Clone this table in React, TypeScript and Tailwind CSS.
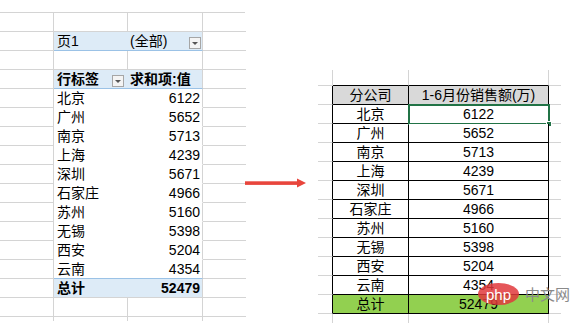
import React from 'react';

const cities: [string, number][] = [
  ['北京', 6122],
  ['广州', 5652],
  ['南京', 5713],
  ['上海', 4239],
  ['深圳', 5671],
  ['石家庄', 4966],
  ['苏州', 5160],
  ['无锡', 5398],
  ['西安', 5204],
  ['云南', 4354],
];

const font = { fontFamily: '"Liberation Sans", "Noto Sans CJK SC", sans-serif' };

const Dropdown = () => (
  <span className="mb-[1px] flex h-[12px] w-[12px] shrink-0 items-center justify-center self-end border border-[#a6a6a6] bg-[#f4f4f4]">
    <span className="h-0 w-0 border-x-[3px] border-t-[3px] border-x-transparent border-t-[#555]" />
  </span>
);

// one row of the left sheet; middle is either plain grid cells or a pivot cell
const LeftRow: React.FC<{ children?: React.ReactNode; h?: string }> = ({ children, h = 'h-[19px]' }) => (
  <div className={`flex ${h}`}>
    <div className="w-[54px] shrink-0 border-r border-b border-[#d4d4d4]" />
    {children ?? (
      <>
        <div className="w-[74px] shrink-0 border-r border-b border-[#d4d4d4]" />
        <div className="w-[75px] shrink-0 border-r border-b border-[#d4d4d4]" />
      </>
    )}
    <div className="w-[43px] shrink-0 border-b border-[#d4d4d4]" />
  </div>
);

const PivotCell: React.FC<{ bg: string; bottom: string; children: React.ReactNode }> = ({ bg, bottom, children }) => (
  <div className={`flex w-[149px] shrink-0 border-r border-b border-r-[#d4d4d4] text-[14px] leading-[18px] text-black ${bg} ${bottom}`}>
    {children}
  </div>
);

function LeftSheet() {
  return (
    <div className="mt-[12px] w-[245px] shrink-0 border-t border-[#d4d4d4]">
      <LeftRow />
      <LeftRow>
        <PivotCell bg="bg-[#ddebf7]" bottom="border-b-[#9bc2e6]">
          <span className="w-[74px] pl-[3px]">页1</span>
          <span className="flex flex-1 justify-between pl-[2px] pr-[1px]">
            <span>(全部)</span>
            <Dropdown />
          </span>
        </PivotCell>
      </LeftRow>
      <LeftRow />
      <LeftRow>
        <PivotCell bg="bg-[#ddebf7]" bottom="border-b-[#9bc2e6]">
          <span className="flex w-[74px] justify-between pl-[3px] pr-[4px] font-bold">
            <span>行标签</span>
            <Dropdown />
          </span>
          <span className="flex-1 pl-[2px] font-bold">求和项:值</span>
        </PivotCell>
      </LeftRow>
      {cities.map(([name, v], i) => (
        <LeftRow key={name}>
          <PivotCell
            bg="bg-white"
            bottom={i === cities.length - 1 ? 'border-b-[#9bc2e6]' : 'border-b-transparent'}
          >
            <span className="w-[74px] pl-[3px]">{name}</span>
            <span className="flex-1 pr-[2px] text-right">{v}</span>
          </PivotCell>
        </LeftRow>
      ))}
      <LeftRow>
        <PivotCell bg="bg-[#ddebf7]" bottom="border-b-[#d4d4d4]">
          <span className="w-[74px] pl-[3px] font-bold">总计</span>
          <span className="flex-1 pr-[2px] text-right font-bold">52479</span>
        </PivotCell>
      </LeftRow>
      <LeftRow />
      <div className="flex h-[4px]">
        <div className="w-[54px] shrink-0 border-r border-[#d4d4d4]" />
        <div className="w-[74px] shrink-0 border-r border-[#d4d4d4]" />
        <div className="w-[75px] shrink-0 border-r border-[#d4d4d4]" />
      </div>
    </div>
  );
}

const TableRow: React.FC<{ a: string; b: React.ReactNode; bg?: string; selected?: boolean }> = ({ a, b, bg = 'bg-white', selected }) => (
  <div className="flex h-[19px] text-[14px] leading-[18px] text-black">
    <div className="w-[15px] shrink-0 border-r border-b border-r-black border-b-[#d4d4d4]" />
    <div className={`w-[76px] shrink-0 border-r border-b border-black text-center ${bg}`}>{a}</div>
    <div className={`relative w-[140px] shrink-0 border-r border-b border-black text-center ${bg}`}>
      {b}
      {selected && (
        <span className="absolute -left-px -top-px -right-[2px] -bottom-[2px] border-2 border-[#217346]">
          <span className="absolute -right-[4px] -bottom-[4px] h-[6px] w-[6px] border border-white bg-[#217346]" />
        </span>
      )}
    </div>
    <div className="w-[12px] shrink-0 border-b border-[#d4d4d4]" />
  </div>
);

function RightSheet() {
  return (
    <div className="mt-[70px] w-[243px] shrink-0">
      <div className="flex h-[16px]">
        <div className="w-[15px] shrink-0 border-r border-b border-[#d4d4d4]" />
        <div className="w-[76px] shrink-0 border-r border-b border-r-[#d4d4d4] border-b-black" />
        <div className="w-[140px] shrink-0 border-r border-b border-r-[#d4d4d4] border-b-black" />
        <div className="w-[12px] shrink-0 border-b border-[#d4d4d4]" />
      </div>
      <TableRow a="分公司" b="1-6月份销售额(万)" bg="bg-[#d9d9d9]" />
      {cities.map(([name, v], i) => (
        <TableRow key={name} a={name} b={v} selected={i === 0} />
      ))}
      <TableRow a="总计" b="52479" bg="bg-[#92d050]" />
      <div className="flex h-[10px]">
        <div className="w-[15px] shrink-0 border-r border-[#d4d4d4]" />
        <div className="w-[76px] shrink-0 border-r border-[#d4d4d4]" />
        <div className="w-[140px] shrink-0 border-r border-[#d4d4d4]" />
      </div>
    </div>
  );
}

export default function App() {
  return (
    <div className="relative flex h-[323px] w-[578px] overflow-hidden bg-white" style={font}>
      <LeftSheet />
      <div className="w-[73px] shrink-0 pt-[178px]">
        <svg width="62" height="10" viewBox="0 0 62 10">
          <rect x="0" y="3.3" width="53" height="3.6" fill="#e8453c" />
          <polygon points="52,0.5 61,5 52,9.5" fill="#e8453c" />
        </svg>
      </div>
      <RightSheet />
      {/* php 中文网 watermark */}
      <div className="absolute left-[478px] top-[283px] flex items-center gap-[6px]">
        <span className="flex h-[22px] w-[41px] items-center justify-center rounded-[50%] bg-[#e0383c]/85 text-[15px] leading-none text-white">
          php
        </span>
        <span className="text-[15px] leading-none text-[#8a8a8a]">中文网</span>
      </div>
    </div>
  );
}
